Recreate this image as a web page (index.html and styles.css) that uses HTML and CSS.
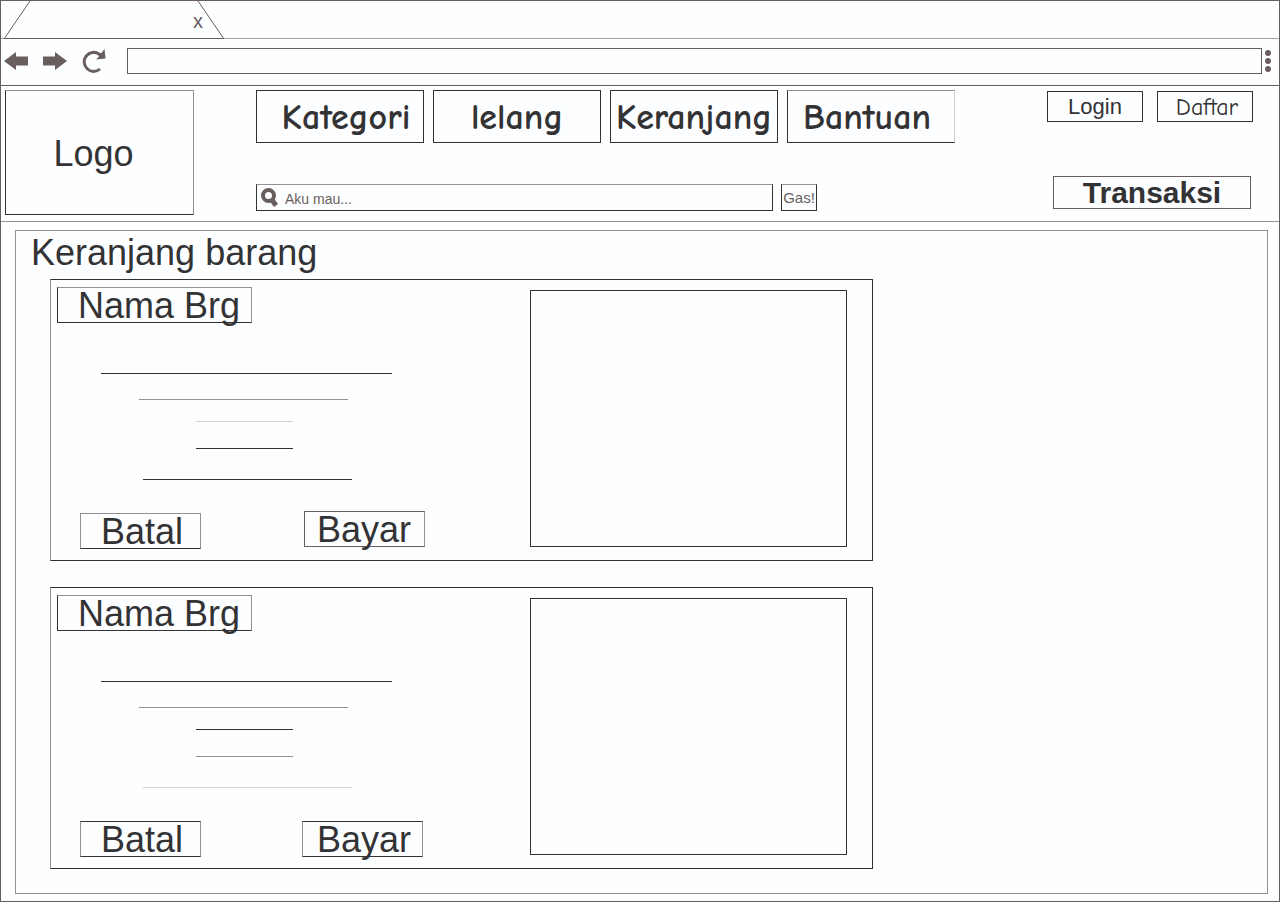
FILE: index.html
```html
<!DOCTYPE html>
<html lang="id">
<head>
<meta charset="utf-8">
<meta name="viewport" content="width=device-width, initial-scale=1">
<title>Keranjang barang</title>
<link rel="stylesheet" href="styles.css">
</head>
<body>
<div class="window">
  <div class="tabs">
    <svg class="tab-shape" width="224" height="38" viewBox="0 0 224 38" aria-hidden="true"><path d="M3 38 29 0M197 0 223 38M3 37.5H223"/></svg>
    <button class="tab-close" type="button" aria-label="Tutup tab">x</button>
  </div>
  <div class="toolbar">
    <button class="tool" type="button" aria-label="Kembali"><svg width="24" height="18" viewBox="0 0 24 18"><path d="M0 9 12 0V4.500H24V13.500H12V18Z"/></svg></button>
    <button class="tool forward" type="button" aria-label="Maju"><svg width="24" height="18" viewBox="0 0 24 18"><path d="M24 9 12 0V4.500H0V13.500H12V18Z"/></svg></button>
    <button class="tool reload" type="button" aria-label="Muat ulang"><svg width="24" height="24" viewBox="0 0 24 24"><path class="arc" d="M18 20A9.500 9.500 0 1 1 17 5"/><path d="M22.500 0 23.500 9.500 14 10.500 17 7.500 15 4 19.500 4Z"/></svg></button>
    <input class="address" type="text" aria-label="Alamat">
    <button class="tool more" type="button" aria-label="Menu"><svg width="6" height="22" viewBox="0 0 6 22"><circle cx="3" cy="3" r="3"/><circle cx="3" cy="11" r="3"/><circle cx="3" cy="19" r="3"/></svg></button>
  </div>

  <header class="header">
    <a class="logo" href="#">Logo</a>
    <div class="center">
      <nav class="nav">
        <a class="nav-link first" href="#">Kategori</a>
        <a class="nav-link" href="#">lelang</a>
        <a class="nav-link" href="#">Keranjang</a>
        <a class="nav-link last" href="#">Bantuan</a>
      </nav>
      <form class="search">
        <label class="search-box">
          <svg width="18" height="20" viewBox="0 0 18 20" aria-hidden="true"><circle cx="7.500" cy="7.500" r="5.500"/><path class="handle" d="M11 12 15 17.500"/></svg>
          <input class="search-input" type="text" placeholder="Aku mau..." aria-label="Cari barang">
        </label>
        <button class="search-go" type="button">Gas!</button>
      </form>
    </div>
    <div class="account">
      <div class="account-row">
        <a class="account-link" href="#">Login</a>
        <a class="account-link register" href="#">Daftar</a>
      </div>
      <a class="transactions" href="#">Transaksi</a>
    </div>
  </header>

  <main class="content">
    <section class="panel">
      <h1 class="title">Keranjang barang</h1>
      <div class="cards">
        <article class="card">
          <div class="details">
            <h2 class="name">Nama Brg</h2>
            <div class="lines">
              <hr class="line long"><hr class="line medium gray"><hr class="line short pale"><hr class="line short"><hr class="line medium lower">
            </div>
            <div class="actions staggered">
              <button class="action" type="button">Batal</button>
              <button class="action pay" type="button">Bayar</button>
            </div>
          </div>
          <div class="photo"></div>
        </article>
        <article class="card">
          <div class="details">
            <h2 class="name">Nama Brg</h2>
            <div class="lines">
              <hr class="line long"><hr class="line medium gray"><hr class="line short"><hr class="line short gray"><hr class="line medium lower pale">
            </div>
            <div class="actions">
              <button class="action" type="button">Batal</button>
              <button class="action pay" type="button">Bayar</button>
            </div>
          </div>
          <div class="photo"></div>
        </article>
      </div>
    </section>
  </main>
</div>
</body>
</html>
```

FILE: styles.css
```css
:root {
  --ink: #333335;
  --brown: #685e5e;
  --gray: #929294;
  --pale: #cfcfd1;
  --paper: #fdfeff;
  --sans: "Liberation Sans", Arial, sans-serif;
  --comic: "Comic Sans MS", "Comic Neue", "Noto Sans", sans-serif;
}

* { box-sizing: border-box; }

body {
  margin: 0;
  background: var(--paper);
  color: var(--ink);
  font-family: var(--sans);
}

a { color: inherit; text-decoration: none; }

button, input {
  margin: 0;
  padding: 0;
  border: 0;
  border-radius: 0;
  background: none;
  color: inherit;
  font-family: inherit;
}

.window {
  display: flex;
  flex-direction: column;
  min-height: 100vh;
  border: 1px solid var(--brown);
}

/* browser chrome */
.tabs {
  display: flex;
  align-items: center;
  height: 38px;
  border-bottom: 1px solid #aaa2a2;
}

.tab-shape {
  margin-bottom: -1px;
  fill: none;
  stroke: var(--brown);
}

.tab-close {
  margin-left: -32px;
  padding-top: 2px;
  color: var(--brown);
  font-size: 20px;
  line-height: 24px;
}

.toolbar {
  display: flex;
  align-items: center;
  height: 47px;
  padding: 0 8px 2px 3px;
  border-bottom: 1px solid var(--brown);
}

.tool { display: flex; fill: var(--brown); }
.forward { margin-left: 15px; }
.reload { margin: 0 21px 0 15px; }
.arc { fill: none; stroke: var(--brown); stroke-width: 3; }

.address {
  flex: 1;
  min-width: 0;
  height: 26px;
  padding: 0 8px;
  border: 1px solid var(--brown);
  font-size: 15px;
}

.more { margin-left: 3px; }

/* site header */
.header {
  display: flex;
  align-items: stretch;
  padding: 4px 26px 6px 4px;
  border-bottom: 1px solid var(--gray);
}

.logo {
  display: flex;
  align-items: center;
  justify-content: center;
  width: 189px;
  height: 125px;
  padding: 2px 12px 0 0;
  border: 1px solid;
  border-color: var(--gray) var(--gray) var(--ink) var(--ink);
  font-size: 36px;
}

.center {
  display: flex;
  flex-direction: column;
  justify-content: space-between;
  margin-left: 62px;
  padding-bottom: 4px;
}

.nav { display: flex; gap: 9px; }

.nav-link {
  width: 168px;
  padding-top: 2px;
  border: 1px solid var(--ink);
  font-family: var(--comic);
  font-size: 36px;
  font-weight: 700;
  line-height: 49px;
  text-align: center;
}

.nav-link.first { padding-left: 12px; }
.nav-link.last { padding-right: 8px; border-color: var(--gray) var(--pale) var(--ink) var(--ink); }

.search { display: flex; gap: 8px; color: var(--brown); }

.search-box {
  display: flex;
  align-items: center;
  width: 517px;
  height: 27px;
  padding-left: 4px;
  border: 1px solid var(--ink);
  border-top-color: var(--gray);
}

.search-box svg { fill: none; stroke: var(--brown); stroke-width: 4; }
.search-box .handle { stroke-width: 5; }

.search-input {
  flex: 1;
  min-width: 0;
  padding: 3px 6px 0;
  font-size: 14px;
}

.search-input::placeholder { color: var(--brown); opacity: 1; }

.search-go {
  width: 36px;
  border: 1px solid var(--ink);
  border-top-color: var(--gray);
  font-size: 15px;
}

.account {
  display: flex;
  flex-direction: column;
  justify-content: space-between;
  margin-left: auto;
  padding: 1px 0 6px;
}

.account-row { display: flex; gap: 14px; }

.account-link {
  width: 96px;
  padding-top: 1px;
  border: 1px solid var(--ink);
  font-size: 22px;
  line-height: 28px;
  text-align: center;
}

.register {
  padding: 1px 0 0 4px;
  font-family: var(--comic);
  font-size: 24px;
}

.transactions {
  width: 198px;
  margin-left: 6px;
  border: 1px solid var(--brown);
  font-size: 30px;
  font-weight: 700;
  line-height: 31px;
  text-align: center;
}

/* cart */
.content {
  display: flex;
  flex: 1;
  padding: 8px 11px 7px 14px;
}

.panel {
  flex: 1;
  padding-bottom: 24px;
  border: 1px solid var(--gray);
}

.title {
  margin: 0;
  padding: 0 0 5px 15px;
  font-size: 36px;
  font-weight: 400;
  line-height: 43px;
}

.cards {
  display: flex;
  flex-direction: column;
  gap: 26px;
  padding-left: 34px;
}

.card {
  display: flex;
  width: 100%;
  max-width: 823px;
  border: 1px solid var(--ink);
  border-left-color: var(--gray);
}

.details { flex: 1; padding: 7px 0 11px 6px; }

.name {
  width: 195px;
  margin: 0;
  padding: 2px 0 0 20px;
  border: 1px solid;
  border-color: var(--gray) var(--gray) var(--ink) var(--ink);
  font-size: 36px;
  font-weight: 400;
  line-height: 32px;
}

.lines {
  display: flex;
  flex-direction: column;
  gap: 21px;
  padding: 50px 0 33px 44px;
}

.line {
  width: 291px;
  height: 1px;
  margin: 0;
  border: 0;
  background: var(--ink);
}

.line.medium { width: 209px; margin: 4px 0 0 38px; }
.line.short { width: 97px; margin-left: 95px; }
.line.short + .short { margin-top: 5px; }
.line.lower { margin: 9px 0 0 42px; }
.line.gray { background: var(--gray); }
.line.pale { background: var(--pale); }

.actions {
  display: flex;
  align-items: flex-start;
  gap: 101px;
  padding-left: 23px;
}

.action {
  width: 121px;
  height: 36px;
  padding: 2px 0 0 20px;
  border: 1px solid;
  border-color: var(--ink) var(--gray) var(--ink) var(--gray);
  font-size: 36px;
  line-height: 32px;
  text-align: left;
}

.pay { padding-left: 14px; }
.staggered { gap: 103px; }
.staggered .action { border-top-color: var(--gray); }
.staggered .pay { margin-top: -2px; padding-left: 12px; border-color: var(--brown) var(--gray) var(--brown) var(--brown); }

.photo {
  width: 317px;
  height: 257px;
  margin: 10px 25px 13px 0;
  border: 1px solid var(--ink);
}
```
